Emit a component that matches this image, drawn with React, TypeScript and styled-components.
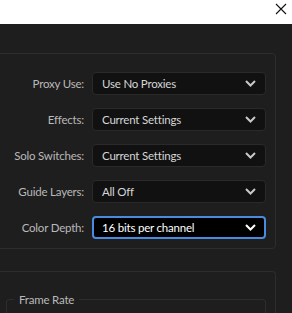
import React from "react";
import styled, { createGlobalStyle } from "styled-components";

const Global = createGlobalStyle`
  html, body { margin: 0; padding: 0; background: #1e1e1e; }
  body { font-family: Lato, "Open Sans", sans-serif; width: 292px; height: 313px; overflow: hidden; }
`;

const Page = styled.div`
  width: 292px;
  height: 313px;
  display: flex;
  flex-direction: column;
  background: #1e1e1e;
  overflow: hidden;
`;

const TitleBar = styled.div`
  height: 24px;
  flex: none;
  background: #ffffff;
  display: flex;
  justify-content: flex-end;
  align-items: flex-start;
`;

const CloseButton = styled.button`
  width: 20px;
  height: 18px;
  margin-right: 1px;
  padding: 0;
  border: none;
  background: transparent;
  display: flex;
  align-items: center;
  justify-content: center;
`;

const Body = styled.div`
  padding: 29px 16px 0 0;
  display: flex;
  flex-direction: column;
  gap: 22px;
`;

const Panel = styled.div<{ $open?: boolean }>`
  margin-left: -10px;
  border: 1px solid #2d2d2d;
  border-radius: 4px;
  background: #1e1e1e;
  ${(p) =>
    p.$open
      ? "border-bottom: none; border-bottom-left-radius: 0; border-bottom-right-radius: 0; padding: 21px 9px 0 15px; height: 60px;"
      : "padding: 18px 9px 9px 0;"}
`;

const Rows = styled.div`
  display: grid;
  grid-template-columns: 93px 174px;
  column-gap: 8px;
  row-gap: 13px;
  align-items: center;
`;

const Label = styled.label`
  text-align: right;
  font-size: 11.5px;
  letter-spacing: -0.2px;
  color: #b9b9b9;
  white-space: nowrap;
`;

const Select = styled.div<{ $focus?: boolean }>`
  box-sizing: border-box;
  height: 23px;
  border-radius: 4px;
  background: ${(p) => (p.$focus ? "#000000" : "#111111")};
  border: ${(p) => (p.$focus ? "2px solid #4a8be0" : "1px solid #2a2a2a")};
  color: ${(p) => (p.$focus ? "#ffffff" : "#d6d6d6")};
  font-size: 11.5px;
  letter-spacing: -0.2px;
  display: flex;
  align-items: center;
  justify-content: space-between;
  padding: ${(p) => (p.$focus ? "0 8px 0 8px" : "0 9px 0 9px")};
`;

const Chevron = styled.svg`
  flex: none;
  width: 11px;
  height: 7px;
`;

const Fieldset = styled.fieldset`
  margin: 0;
  padding: 0;
  border: 1px solid #2d2d2d;
  border-bottom: none;
  border-radius: 4px 4px 0 0;
  height: 40px;
`;

const Legend = styled.legend`
  font-size: 11.5px;
  letter-spacing: -0.2px;
  color: #b9b9b9;
  padding: 0 5px;
  margin-left: 7px;
`;

const rows = [
  { label: "Proxy Use:", value: "Use No Proxies" },
  { label: "Effects:", value: "Current Settings" },
  { label: "Solo Switches:", value: "Current Settings" },
  { label: "Guide Layers:", value: "All Off" },
  { label: "Color Depth:", value: "16 bits per channel", focus: true },
];

export default function App() {
  return (
    <Page>
      <Global />
      <TitleBar>
        <CloseButton aria-label="Close">
          <svg width="12" height="12" viewBox="0 0 12 12">
            <path d="M1 1 L11 11 M11 1 L1 11" stroke="#111" strokeWidth="1.1" fill="none" />
          </svg>
        </CloseButton>
      </TitleBar>
      <Body>
        <Panel>
          <Rows>
            {rows.map((r) => (
              <React.Fragment key={r.label}>
                <Label>{r.label}</Label>
                <Select $focus={r.focus}>
                  <span>{r.value}</span>
                  <Chevron viewBox="0 0 11 7">
                    <path d="M1 1 L5.5 5.5 L10 1" stroke={r.focus ? "#ffffff" : "#c8c8c8"} strokeWidth="2" fill="none" />
                  </Chevron>
                </Select>
              </React.Fragment>
            ))}
          </Rows>
        </Panel>
        <Panel $open>
          <Fieldset>
            <Legend>Frame Rate</Legend>
          </Fieldset>
        </Panel>
      </Body>
    </Page>
  );
}
